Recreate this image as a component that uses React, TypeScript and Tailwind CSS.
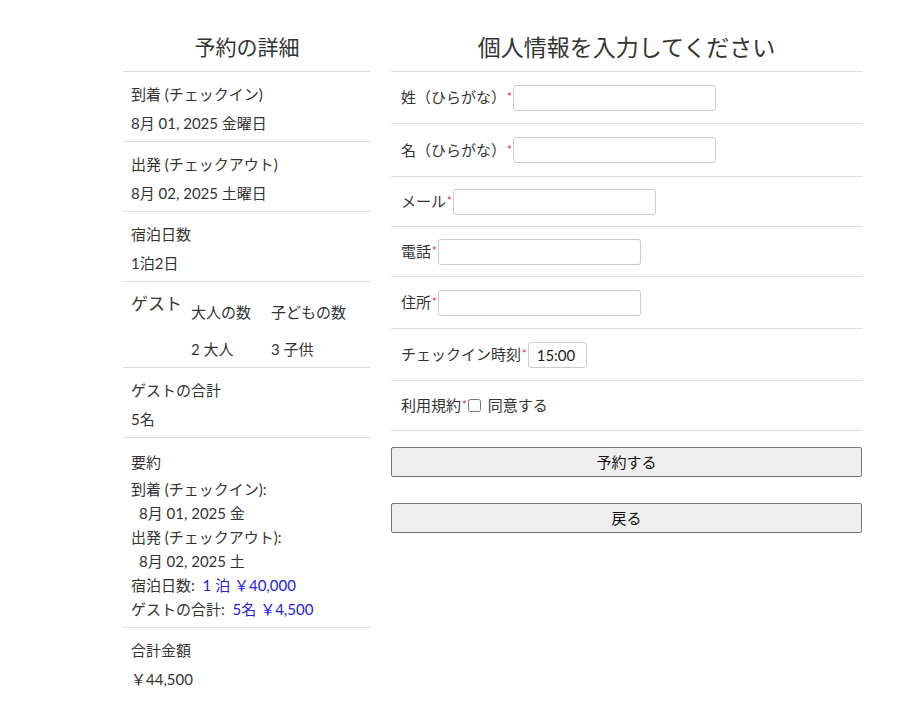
export default function App() {
  const f = { fontFamily: "Lato, 'Noto Sans CJK JP', sans-serif" };
  const Star = () => <span className="text-[#e0245e] text-[11px] mx-[1px]">*</span>;
  const Row = ({ children, h }: { children: React.ReactNode; h: string }) => (
    <div className={`border-t border-[#dddddd] flex items-center pl-[10px] ${h}`}>{children}</div>
  );
  const Inp = ({ w, v }: { w: string; v?: string }) => (
    <input readOnly value={v || ""} className={`${w} h-[26px] border border-[#cccccc] rounded-[3px] px-[8px] text-[15px] text-[#222]`} />
  );
  const L = ({ h, label, children }: { h: string; label: string; children: React.ReactNode }) => (
    <div className={`border-t border-[#dddddd] px-[8px] pt-[12px] ${h}`}>
      <div className="leading-[20px]">{label}</div>
      <div className="leading-[20px] mt-[9px]">{children}</div>
    </div>
  );
  return (
    <div style={f} className="w-[918px] h-[720px] bg-white text-[15px] text-[#333] flex gap-[20px] pl-[123px] pt-[32px]">
      <div className="w-[248px]">
        <div className="text-[21px] text-center h-[39px] leading-[30px]">予約の詳細</div>
        <L h="h-[70px]" label="到着 (チェックイン)">8月 01, 2025 金曜日</L>
        <L h="h-[70px]" label="出発 (チェックアウト)">8月 02, 2025 土曜日</L>
        <L h="h-[70px]" label="宿泊日数">1泊2日</L>
        <div className="border-t border-[#dddddd] px-[8px] pt-[12px] h-[86px] flex">
          <div className="text-[17px] leading-[20px] w-[60px]">ゲスト</div>
          <div className="grid grid-cols-[80px_80px] mt-[8px] leading-[20px] gap-y-[9px]">
            <div>大人の数</div><div>子どもの数</div>
            <div>2 大人</div><div>3 子供</div>
          </div>
        </div>
        <L h="h-[70px]" label="ゲストの合計">5名</L>
        <div className="border-t border-[#dddddd] px-[8px] pt-[12px] h-[190px] leading-[24px]">
          <div className="mb-[3px]">要約</div>
          <div>到着 (チェックイン):</div>
          <div className="pl-[8px]">8月 01, 2025 金</div>
          <div>出発 (チェックアウト):</div>
          <div className="pl-[8px]">8月 02, 2025 土</div>
          <div>宿泊日数: <span className="text-[#2222dd] ml-[4px]">1 泊 ￥40,000</span></div>
          <div>ゲストの合計: <span className="text-[#2222dd] ml-[4px]">5名 ￥4,500</span></div>
        </div>
        <L h="h-[70px]" label="合計金額">￥44,500</L>
      </div>
      <div className="w-[471px]">
        <div className="text-[23px] text-center h-[39px] leading-[30px]">個人情報を入力してください</div>
        <Row h="h-[52px]">姓（ひらがな）<Star /><Inp w="w-[203px]" /></Row>
        <Row h="h-[53px]">名（ひらがな）<Star /><Inp w="w-[203px]" /></Row>
        <Row h="h-[50px]">メール<Star /><Inp w="w-[203px]" /></Row>
        <Row h="h-[50px]">電話<Star /><Inp w="w-[203px]" /></Row>
        <Row h="h-[52px]">住所<Star /><Inp w="w-[203px]" /></Row>
        <Row h="h-[52px]">チェックイン時刻<Star /><Inp w="w-[59px]" v="15:00" /></Row>
        <Row h="h-[50px]">利用規約<Star /><input type="checkbox" className="w-[13px] h-[13px] mr-[7px]" />同意する</Row>
        <div className="border-t border-[#dddddd] pt-[16px] flex flex-col gap-[26px]">
          <button className="h-[30px] w-full bg-[#efefef] border border-[#767676] rounded-[2px] text-[15px] text-[#111]">予約する</button>
          <button className="h-[30px] w-full bg-[#efefef] border border-[#767676] rounded-[2px] text-[15px] text-[#111]">戻る</button>
        </div>
      </div>
    </div>
  );
}
